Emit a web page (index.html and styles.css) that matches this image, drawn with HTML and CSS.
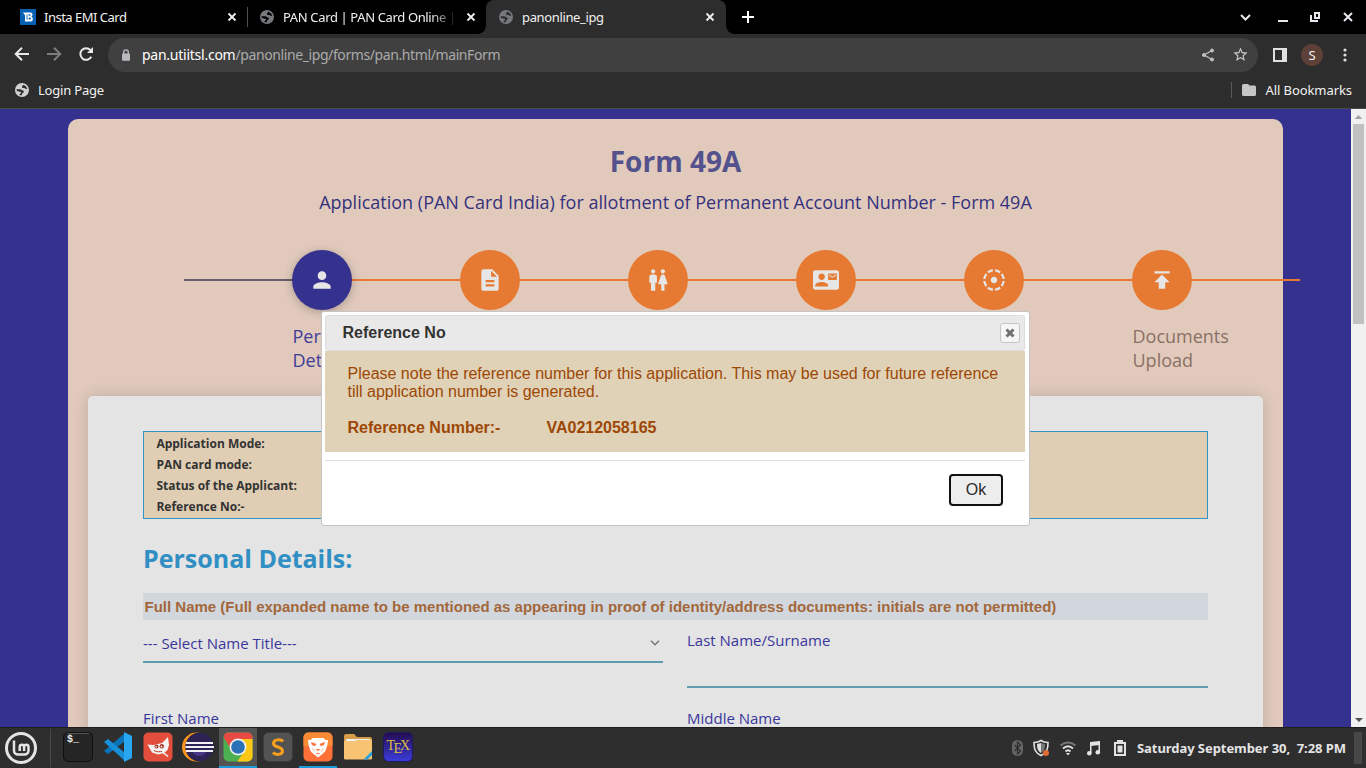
FILE: index.html
```html
<!DOCTYPE html>
<html lang="en">
<head>
<meta charset="utf-8">
<title>panonline_ipg</title>
<link rel="stylesheet" href="styles.css">
</head>
<body>
<svg class="defs" width="0" height="0">
  <symbol id="globe" viewBox="0 0 16 16"><path fill="currentColor" fill-rule="evenodd" d="M8 1a7 7 0 1 0 0 14A7 7 0 0 0 8 1zM2.600 7.300h3.600c1.300 0 1.500 1.200 2.600 1.200 1 0 1.200.8 1 1.500-.3.900-1.600.8-1.700 1.900-.1.700-.5 1.500-1.200 1.500a5.500 5.500 0 0 1-1.500-.6v-.9c1 0 1.700-.5 1.700-1.200 0-.6-.5-.9-1.200-.9-1.500 0-2.200-.8-3.200-1zM9.300 2.700a5.500 5.500 0 0 1 4 4.100c-.9.300-2 .2-2.500-.5-.3-.5-.9-.3-1.500-.3-.8 0-1.300-.5-1.300-1.100 0-.7.700-.8.700-1.300z"/></symbol>
  <symbol id="close" viewBox="0 0 10 10"><path d="M1.500 1.500l7 7m0-7l-7 7" stroke="currentColor" stroke-width="1.800"/></symbol>
</svg>
<header class="browser">
  <div class="tabs">
    <div class="tab tab-first">
      <svg class="fav" viewBox="0 0 16 16"><path fill="#0560b4" d="M0 0h16v16H0z"/><path fill="#fff" fill-rule="evenodd" d="M3 3.500h7.500q2 0 2 1.800 0 1.500-1 2.200 1.300.7 1.300 2.400 0 2.600-2.800 2.600H5V6.200zM6.600 5.400v5.400h.9V5.400zM8.700 5.200v1.500h1.200q.8 0 .8-.8 0-.7-.8-.7zM8.700 8.400v2.200h1.200q1 0 1-1.100t-1-1.100z"/></svg>
      <span class="ui t1">Insta EMI Card</span>
      <svg class="x"><use href="#close"/></svg>
    </div>
    <div class="tab tab-second">
      <svg class="fav grey"><use href="#globe"/></svg>
      <span class="ui t2">PAN Card | PAN Card Online |</span>
      <svg class="x"><use href="#close"/></svg>
    </div>
    <div class="tab tab-active">
      <svg class="fav grey"><use href="#globe"/></svg>
      <span class="ui t3">panonline_ipg</span>
      <svg class="x"><use href="#close"/></svg>
    </div>
    <svg class="plus" viewBox="0 0 12 12"><path d="M6 0v12M0 6h12" stroke="#fff" stroke-width="2"/></svg>
    <svg class="winctl" viewBox="0 0 120 34"><g fill="none" stroke="#e6e8ec" stroke-width="2"><path d="M5 15l4.500 4.500L14 15"/><path d="M42 21h10"/><path d="M79 13h4v5h-4zM75 15v6h7"/><path d="M108 13l8 8m0-8l-8 8"/></g></svg>
  </div>
  <div class="toolbar">
    <svg class="nav" viewBox="0 0 108 41"><g fill="none" stroke-width="2"><path d="M29 20H16m6-6.300L15.700 20l6.300 6.300" stroke="#e8e8e8"/><path d="M47 20h13m-6-6.300l6.300 6.300-6.300 6.300" stroke="#7d7d7d"/><path d="M91.300 22.700a5.800 5.800 0 1 1-.8-6.500" stroke="#e8e8e8"/></g><path d="M93 13v6h-6z" fill="#e8e8e8"/></svg>
    <div class="omnibox">
      <svg class="lock" viewBox="0 0 10 12"><path fill="none" stroke="#b8babd" stroke-width="1.400" d="M2.700 5V3.200a2.300 2.300 0 0 1 4.600 0V5"/><rect x="1" y="4.600" width="8" height="7.200" rx="1" fill="#b8babd"/></svg>
      <span class="url"><b>pan.utiitsl.com</b>/panonline_ipg/forms/pan.html/mainForm</span>
      <svg class="share" viewBox="0 0 14 14"><g fill="#c0c1c3" stroke="#c0c1c3"><path d="M11 2.500L3 7l8 4.500" fill="none" stroke-width="1.300"/><circle cx="11" cy="2.500" r="1.500"/><circle cx="3" cy="7" r="1.500"/><circle cx="11" cy="11.500" r="1.500"/></g></svg>
      <svg class="star" viewBox="0 0 24 24"><path fill="#c8c9ca" d="M22 9.240l-7.190-.62L12 2 9.190 8.630 2 9.240l5.460 4.730L5.820 21 12 17.270 18.180 21l-1.630-7.030L22 9.240zM12 15.400l-3.760 2.270 1-4.280-3.320-2.880 4.380-.38L12 6.100l1.710 4.040 4.380.38-3.320 2.880 1 4.280L12 15.400z"/></svg>
    </div>
    <svg class="panel" viewBox="0 0 14 14"><path d="M1 1h12v12H1z" fill="none" stroke="#e0e0e0" stroke-width="2"/><path d="M9 0h5v14H9z" fill="#e0e0e0"/></svg>
    <span class="avatar">S</span>
    <svg class="dots" viewBox="0 0 4 14"><g fill="#e0e0e0"><circle cx="2" cy="2" r="1.600"/><circle cx="2" cy="7" r="1.600"/><circle cx="2" cy="12" r="1.600"/></g></svg>
  </div>
  <div class="bookmarks">
    <svg class="fav light"><use href="#globe"/></svg>
    <span class="ui b1">Login Page</span>
    <span class="bdiv"></span>
    <svg class="folder" viewBox="0 0 14 12"><path fill="#c5c5c5" d="M1.500 0H6l1.500 1.500h5A1.500 1.500 0 0 1 14 3v7.500a1.500 1.500 0 0 1-1.500 1.500h-11A1.500 1.500 0 0 1 0 10.500v-9A1.500 1.500 0 0 1 1.500 0z"/></svg>
    <span class="ui b2">All Bookmarks</span>
  </div>
</header>

<main class="viewport">
  <div class="page">
    <section class="card">
      <h1>Form 49A</h1>
      <p class="subtitle">Application (PAN Card India) for allotment of Permanent Account Number - Form 49A</p>
      <ol class="steps">
        <li class="step active"><span class="dot"><svg viewBox="0 0 24 24"><path d="M12 12c2.210 0 4-1.790 4-4s-1.790-4-4-4-4 1.790-4 4 1.790 4 4 4zm0 2c-2.670 0-8 1.340-8 4v2h16v-2c0-2.660-5.330-4-8-4z"/></svg></span><span class="label">Personal<br>Details</span></li>
        <li class="step"><span class="dot"><svg viewBox="0 0 24 24"><path d="M14 2H6c-1.100 0-1.990.9-1.990 2L4 20c0 1.100.89 2 1.990 2H18c1.100 0 2-.9 2-2V8l-6-6zm2 16H8v-2h8v2zm0-4H8v-2h8v2zm-3-5V3.500L18.500 9H13z"/></svg></span><span class="label"></span></li>
        <li class="step"><span class="dot"><svg viewBox="0 0 24 24"><path d="M5.500 22v-7.500H4V9c0-1.100.9-2 2-2h3c1.100 0 2 .9 2 2v5.500H9.500V22h-4zM18 22v-6h3l-2.540-7.630A2.010 2.010 0 0 0 16.560 7h-.12a2 2 0 0 0-1.900 1.370L12 16h3v6h3zM7.500 6c1.110 0 2-.89 2-2s-.89-2-2-2-2 .89-2 2 .89 2 2 2zm9 0c1.110 0 2-.89 2-2s-.89-2-2-2-2 .89-2 2 .89 2 2 2z"/></svg></span><span class="label"></span></li>
        <li class="step"><span class="dot"><svg viewBox="0 0 24 24"><path d="M21 8V7l-3 2-3-2v1l3 2 3-2zm1-5H2C.9 3 0 3.900 0 5v14c0 1.100.9 2 2 2h20c1.100 0 1.990-.9 1.990-2L24 5c0-1.100-.9-2-2-2zM8 6c1.660 0 3 1.340 3 3s-1.340 3-3 3-3-1.340-3-3 1.340-3 3-3zm6 12H2v-1c0-2 4-3.100 6-3.100s6 1.100 6 3.100v1zm8-6h-8V6h8v6z"/></svg></span><span class="label"></span></li>
        <li class="step"><span class="dot"><svg viewBox="0 0 24 24"><path d="M11 4.070V2.050c-2.010.2-3.840 1-5.320 2.210L7.100 5.690A7.940 7.940 0 0 1 11 4.070zm7.320.19C16.840 3.050 15.010 2.250 13 2.050v2.020c1.460.18 2.790.76 3.900 1.620l1.420-1.430zM19.930 11h2.020c-.2-2.010-1-3.840-2.210-5.320L18.310 7.100c.86 1.110 1.440 2.440 1.620 3.900zM5.690 7.100L4.260 5.680A9.950 9.950 0 0 0 2.050 11h2.020c.18-1.460.76-2.790 1.620-3.900zM4.070 13H2.050c.2 2.010 1 3.840 2.210 5.320l1.430-1.430A7.870 7.870 0 0 1 4.070 13zM15 12c0-1.660-1.340-3-3-3s-3 1.340-3 3 1.340 3 3 3 3-1.340 3-3zm3.310 4.900l1.430 1.430A9.980 9.980 0 0 0 21.950 13h-2.020a7.940 7.940 0 0 1-1.620 3.900zM13 19.930v2.020c2.010-.2 3.840-1 5.320-2.210l-1.430-1.430A7.870 7.870 0 0 1 13 19.930zm-7.320-.19A9.980 9.980 0 0 0 11 21.950v-2.020a7.940 7.940 0 0 1-3.900-1.620l-1.420 1.430z"/></svg></span><span class="label"></span></li>
        <li class="step"><span class="dot"><svg viewBox="0 0 24 24"><path d="M5 4v2h14V4H5zm0 10h4v6h6v-6h4l-7-7-7 7z"/></svg></span><span class="label">Documents<br>Upload</span></li>
      </ol>
      <form class="form">
        <dl class="info"><dt>Application Mode:</dt><dt>PAN card mode:</dt><dt>Status of the Applicant:</dt><dt>Reference No:-</dt></dl>
        <h2>Personal Details:</h2>
        <h3>Full Name (Full expanded name to be mentioned as appearing in proof of identity/address documents: initials are not permitted)</h3>
        <div class="fields">
          <div class="select"><span>--- Select Name Title---</span><svg viewBox="0 0 10 6"><path d="M1 .8l4 4 4-4" fill="none" stroke="#777" stroke-width="1.500"/></svg></div>
          <div class="input">Last Name/Surname</div>
          <div class="next">First Name</div>
          <div class="next">Middle Name</div>
        </div>
      </form>
    </section>
  </div>
  <div class="scroll">
    <svg viewBox="0 0 15 15"><path d="M3.500 10h8L7.500 6z" fill="#a3a3a3"/></svg>
    <i class="thumb"></i>
    <svg viewBox="0 0 15 15"><path d="M4 6h8l-4 4z" fill="#505050"/></svg>
  </div>
  <div class="dialog">
    <div class="dialog-title"><span>Reference No</span><button class="dialog-close"><svg viewBox="0 0 10 10"><path d="M1.500 1.500l7 7m0-7l-7 7" stroke="#707070" stroke-width="3"/></svg></button></div>
    <div class="dialog-body">
      <p>Please note the reference number for this application. This may be used for future reference till application number is generated.</p>
      <p class="ref"><span>Reference Number:-</span><span>VA0212058165</span></p>
    </div>
    <div class="dialog-foot"><button class="ok">Ok</button></div>
  </div>
</main>

<footer class="taskbar">
  <svg class="mint" viewBox="0 0 32 32"><circle cx="16" cy="16" r="14.500" fill="none" stroke="#e4e4e4" stroke-width="3"/><path d="M9 8.500v10a4 4 0 0 0 4 4h6.500a4 4 0 0 0 4-4V15a2.200 2.200 0 0 0-4.400 0v4M19.100 15a2.200 2.200 0 0 0-4.400 0v4" fill="none" stroke="#e4e4e4" stroke-width="2.500"/></svg>
  <i class="sep"></i>
  <div class="apps">
    <span class="app"><svg viewBox="0 0 30 30"><rect x=".5" y=".5" width="29" height="29" rx="4.500" fill="#252525" stroke="#101010"/><path d="M4 1.500h22" stroke="#555"/><text x="4" y="10" class="prompt">$_</text></svg></span>
    <span class="app"><svg viewBox="0 0 30 30"><path d="M22 1v8L5 22l-4-3L22 1z" fill="#0873b9"/><path d="M1 10l4-3 17 14v8L1 10z" fill="#1790d8"/><path d="M21 0l8 4v22l-8 4z" fill="#28a6ef"/></svg></span>
    <span class="app"><svg viewBox="0 0 30 30"><rect x=".5" y=".5" width="29" height="29" rx="5" fill="#e24d3c"/><path d="M4.500 12.500l6 .5L19 11l6-6 1 8-1.500 5-3.500 3-6 1.500-6-2z" fill="#f2f2f2"/><circle cx="13.500" cy="14.500" r="2" fill="#a73428"/><circle cx="18.800" cy="14.200" r="2.200" fill="#a73428"/><circle cx="13.200" cy="14.800" r=".8" fill="#fff"/><circle cx="18.500" cy="14.600" r=".9" fill="#fff"/><path d="M12 19.500c3 1.500 6 .5 8 1l5 4" fill="none" stroke="#f2f2f2" stroke-width="1.500"/><path d="M11 18.500c3 2 6 1 8 1" fill="none" stroke="#b33d2f"/></svg></span>
    <span class="app"><svg viewBox="0 0 32 30"><circle cx="14.500" cy="15" r="14.500" fill="#f7941e"/><circle cx="18" cy="15" r="14.500" fill="#2d2d2d"/><circle cx="17.500" cy="15" r="14" fill="#2c2255"/><path d="M10 19h15q-3 5-8 5t-7-5z" fill="#473788"/><path d="M4 11h27M3.500 15h28.500M4 19h27" stroke="#f1f0f5" stroke-width="2"/></svg></span>
    <span class="app running focus"><svg viewBox="0 0 30 30"><clipPath id="c"><rect x=".5" y=".5" width="29" height="29" rx="5"/></clipPath><g clip-path="url(#c)"><path fill="#4caf50" d="M0 0h30v30H0z"/><path fill="#fbc816" d="M15 7h15v23H14l8-12z"/><path fill="#e84a43" d="M0 0h30v7H15L8 17 1 6z"/></g><circle cx="15" cy="15" r="8.500" fill="#eee"/><circle cx="15" cy="15" r="6.800" fill="#2972b8"/></svg></span>
    <span class="app"><svg viewBox="0 0 30 30"><rect x=".5" y=".5" width="29" height="29" rx="5" fill="#535353" stroke="#3b3b3b"/><path d="M20 9.500C18 7 10.500 7 10.500 11.500c0 4.500 9 2.500 9 7.500 0 4-7 4.500-9.500 1.500" fill="none" stroke="#f9a01b" stroke-width="3"/></svg></span>
    <span class="app running"><svg viewBox="0 0 30 30"><rect x=".5" y=".5" width="29" height="29" rx="5" fill="#ff7139"/><path d="M.5 14V5.500a5 5 0 0 1 5-5h19a5 5 0 0 1 5 5V14z" fill="#fb8a35"/><path d="M9.500 6h11l2 2 2.500 0-.5 4.500-2 6.500-3 3-4.500 3.500-4.500-3.500-3-3-2-6.500L5 8l2.500 0z" fill="#fff"/><path d="M8.500 10.500l4.500 1.500-.8 1.800-3-1zM21.500 10.500L17 12l.8 1.800 3-1zM13.200 17.500h3.600l-1.800 1.300zM9.500 16.500l2.500 3M20.500 16.500l-2.500 3M13 22l2-1 2 1" fill="#fb7037" stroke="#fb7037" stroke-width=".6"/></svg></span>
    <span class="app"><svg viewBox="0 0 30 30"><path d="M1 4q0-2 2-2h8l3 3h13q2 0 2 2v20H1z" fill="#d69d49"/><path d="M3 7h24v4H3z" fill="#f1f1f1"/><path d="M1 9h11l2-1h15v18q0 1.500-1.500 1.500h-25Q1 27.500 1 26z" fill="#f8c373"/><path d="M29 19l-8.500 8.500h4L29 23z" fill="#279fdd"/></svg></span>
    <span class="app"><svg viewBox="0 0 30 30"><defs><linearGradient id="tx" x2="0" y2="1"><stop stop-color="#250b50"/><stop offset="1" stop-color="#3b3ddd"/></linearGradient></defs><rect x=".5" y=".5" width="29" height="29" rx="5" fill="url(#tx)" stroke="#1d1b60"/><text class="tex" y="18"><tspan x="3.500">T</tspan><tspan x="10.500" dy="3">E</tspan><tspan x="17" dy="-3">X</tspan></text></svg></span>
  </div>
  <svg class="tray" viewBox="0 0 120 20"><rect x="2" y="2" width="11" height="16" rx="5.500" fill="#656565"/><path d="M4.500 7l6 6-3 3V4l3 3-6 6" fill="none" stroke="#2e2e2e" stroke-width="1.200"/><path d="M31 2.500q3 2 7 2c0 7-1 10-7 13-6-3-7-6-7-13q4 0 7-2z" fill="#303030" stroke="#e2e2e2" stroke-width="1.600"/><path d="M31 5v10c-3-2-4-4-4-9z" fill="#ddd"/><path d="M31 5v10c3-2 4-4 4-9z" fill="#777"/><circle cx="36" cy="15" r="3" fill="#e06b33"/><g fill="none" stroke-width="2"><path d="M50.500 7.500q7.500-6 15 0" stroke="#777"/><path d="M53 10.500q5-4.500 10 0M55.500 13.500q2.500-2.500 5 0" stroke="#e3e3e3"/></g><path d="M56 15h4l-2 2.500z" fill="#e3e3e3"/><g fill="#e3e3e3"><path d="M80 4l10-1v4l-10 1z"/><path d="M80 4h1.500v11H80zM88.500 3H90v11h-1.500z"/><circle cx="79.300" cy="15.300" r="2.300"/><circle cx="87.800" cy="14.300" r="2.300"/></g><path d="M105 5h10v12h-10z" fill="none" stroke="#e3e3e3" stroke-width="2"/><path d="M107 2h6v3h-6zM107.500 7.500h5v7h-5z" fill="#e3e3e3"/></svg>
  <span class="clock">Saturday September 30,&nbsp; 7:28 PM</span>
  <i class="desk"></i>
</footer>
</body>
</html>
```
FILE: styles.css
```css
* { box-sizing: border-box; }
body { margin: 0; width: 1366px; height: 768px; overflow: hidden; display: flex; flex-direction: column; font-family: "Open Sans", sans-serif; }
h1, h2, h3, p, ol, dl { margin: 0; padding: 0; }
svg { display: block; flex: none; }
.defs { position: absolute; }

.browser { height: 109px; flex: none; background: #2d2d2d; border-bottom: 1px solid #4b4b4b; color: #f1f1f1; }
.tabs { display: flex; height: 34px; background: #000; }
.tab { display: flex; align-items: center; height: 34px; position: relative; }
.tab-first { width: 247px; padding: 0 10px 0 20px; }
.tab-second { width: 239px; padding: 0 10px 0 12px; }
.tab-first::after { content: ""; width: 1px; height: 20px; background: #4e4e4e; position: absolute; right: -1px; top: 7px; }
.tab-active { width: 240px; padding: 0 11px 0 12px; background: #2d2d2d; border-radius: 8px 8px 0 0; }
.tab-active::before, .tab-active::after { content: ""; position: absolute; bottom: 0; width: 8px; height: 8px; }
.tab-active::before { left: -8px; background: radial-gradient(circle at 0 0, transparent 7.500px, #2d2d2d 8px); }
.tab-active::after { right: -8px; background: radial-gradient(circle at 100% 0, transparent 7.500px, #2d2d2d 8px); }
.fav { width: 16px; height: 16px; margin-right: 8px; }
.grey { color: #75787c; }
.light { color: #d0d1d3; }
.ui { font: 13px/18px "Noto Sans", sans-serif; white-space: nowrap; flex: none; }
.t1 { letter-spacing: -.5px; }
.t2 { letter-spacing: -.36px; width: 172px; overflow: hidden; mask-image: linear-gradient(90deg, #000 148px, transparent 174px); }
.t3 { letter-spacing: -.36px; }
.x { width: 10px; height: 10px; margin-left: auto; }
.plus { width: 12px; height: 12px; margin: 11px 0 0 16px; }
.winctl { width: 120px; height: 34px; margin-left: auto; margin-right: 10px; }

.toolbar { display: flex; align-items: center; height: 41px; }
.nav { width: 108px; height: 41px; }
.omnibox { width: 1150px; height: 34px; border-radius: 17px; background: #404040; display: flex; align-items: center; padding: 0 9px 0 13px; }
.lock { width: 10px; height: 12px; margin-right: 11px; }
.url { font: 14px/20px "Noto Sans", sans-serif; letter-spacing: -.4px; color: #ababab; }
.url b { font-weight: 400; color: #fff; letter-spacing: -.25px; }
.share { width: 14px; height: 14px; margin-left: auto; margin-right: 17px; }
.star { width: 17px; height: 17px; }
.panel { width: 14px; height: 14px; margin-left: 15px; }
.avatar { width: 22px; height: 22px; margin-left: 14px; border-radius: 50%; background: #5d4037; text-align: center; font: 13px/22px "Noto Sans", sans-serif; }
.dots { width: 4px; height: 14px; margin-left: 19.500px; }
.bookmarks { display: flex; align-items: center; height: 29px; padding: 0 14px; }
.b1 { letter-spacing: -.2px; }
.b2 { letter-spacing: -.07px; }
.bdiv { width: 1px; height: 16px; background: #5a5a5a; margin-left: auto; }
.folder { width: 14px; height: 12px; margin: 0 9px 0 10px; }

.viewport { height: 618px; flex: none; display: flex; position: relative; background: #35318f; overflow: hidden; }
.page { width: 1351px; padding: 10px 68px 0; }
.card { width: 1215px; height: 700px; border-radius: 10px; background: #e1cabc; padding: 23px 20px 0; text-align: center; }
h1 { font-size: 28px; line-height: 38px; color: #54528c; }
.subtitle { margin-top: 9px; font-size: 18px; line-height: 26px; color: #35327c; }
.steps { list-style: none; display: flex; width: 1116px; margin: 35px 0 0 96px; padding-left: 108px; height: 146px; background: linear-gradient(#65616c, #65616c) 0 29px / 108px 2px no-repeat, linear-gradient(#e67a32, #e67a32) 108px 29px / 1008px 2px no-repeat; }
.step { width: 168px; flex: none; text-align: left; }
.dot { width: 60px; height: 60px; border-radius: 50%; background: #e67a32; display: grid; place-items: center; padding-left: .5px; padding-bottom: 1px; }
.active .dot { background: #35318f; box-shadow: 0 2px 10px rgba(0,0,0,.25); }
.dot svg { width: 26px; height: 26px; fill: #e6e6e6; }
.label { display: block; margin: 14px 0 0 .5px; font-size: 18px; line-height: 24px; color: #8a7065; }
.active .label { color: #403d98; }
.form { height: 420px; border-radius: 5px; background: #e4e4e4; box-shadow: 0 0 15px rgba(0,0,0,.16); padding: 35px 55px 0; text-align: left; }
.info { height: 88px; border: 1px solid #3492c4; background: #e0ceb4; padding: 1px 12.400px; }
.info dt { font-size: 12px; line-height: 21px; font-weight: 700; color: #333; }
h2 { margin-top: 21px; font-size: 25px; line-height: 36px; color: #318fc3; }
h3 { margin-top: 17px; height: 27px; background: #d1d7dc; padding-left: 1.500px; font: 700 15px/27px "Liberation Sans", sans-serif; color: #a3673b; white-space: nowrap; }
.fields { display: grid; grid-template-columns: 520px 521px; column-gap: 24px; font-size: 15px; line-height: 20px; color: #3a379c; }
.select { height: 43px; border-bottom: 2px solid #619bae; display: flex; align-items: center; justify-content: space-between; padding: 5px 3px 0 0; }
.select svg { width: 10px; height: 6px; }
.input { height: 68px; border-bottom: 2px solid #619bae; padding-top: 10px; }
.next { padding-top: 20px; }

.scroll { width: 15px; background: #f1f1f1; display: flex; flex-direction: column; justify-content: space-between; align-items: center; }
.scroll svg { width: 15px; height: 15px; }
.thumb { width: 11px; height: 200px; background: #c1c1c1; margin-bottom: auto; }

.dialog { position: absolute; left: 321px; top: 202px; width: 709px; height: 215px; border: 1px solid #c5c5c5; border-radius: 3px; background: #fff; padding: 3px; font: 16px/18px "Liberation Sans", sans-serif; color: #333; }
.dialog-title { height: 36px; width: 700px; border: 1px solid #ddd; border-radius: 3px; background: #e9e9e9; display: flex; align-items: center; justify-content: space-between; padding: 0 4px 0 16.500px; font-weight: 700; }
.dialog-close { width: 20px; height: 20px; padding: 0; border: 1px solid #c5c5c5; border-radius: 3px; background: #f6f6f6; display: grid; place-items: center; }
.dialog-close svg { width: 10px; height: 10px; }
.dialog-body { width: 700px; height: 101px; background: #e0d2b6; padding: 14px 22.500px 0; color: #9c4706; }
.ref { margin-top: 18px; font-weight: 700; display: flex; gap: 46px; }
.dialog-foot { width: 700px; margin-top: 8px; border-top: 1px solid #ddd; padding: 13px 22px 0; display: flex; justify-content: flex-end; }
.ok { width: 54px; height: 32px; border: 2px solid #111; border-radius: 4px; background: #ededed; font: 16px/18px "Liberation Sans", sans-serif; color: #2b2b2b; padding: 0; }

.taskbar { height: 41px; flex: none; display: flex; align-items: center; background: #2e2e2e; border-top: 1px solid #1d1d1d; padding-left: 5px; }
.mint { width: 32px; height: 32px; }
.sep { width: 1px; height: 38px; background: #484848; margin: 0 8px 0 13px; }
.apps { display: flex; gap: 2px; }
.app { width: 38px; height: 40px; display: flex; justify-content: center; padding-top: 4px; border-bottom: 2px solid transparent; }
.app svg { width: 30px; height: 30px; }
.app:nth-child(4) svg { width: 32px; }
.running { border-bottom-color: #1c9bdc; }
.focus { background: #545454; }
.prompt { font: 700 10px "Liberation Mono", monospace; fill: #eee; }
.tex { font: 14px "Liberation Serif", serif; fill: #d9bd3d; }
.tray { width: 120px; height: 20px; margin-left: auto; margin-right: 7px; }
.clock { width: 210px; white-space: nowrap; font: 700 13px/20px "Noto Sans", sans-serif; letter-spacing: -.06px; color: #e4e4e4; }
.desk { width: 8px; height: 32px; background: #484848; margin: 0 4px 0 7px; }
```
